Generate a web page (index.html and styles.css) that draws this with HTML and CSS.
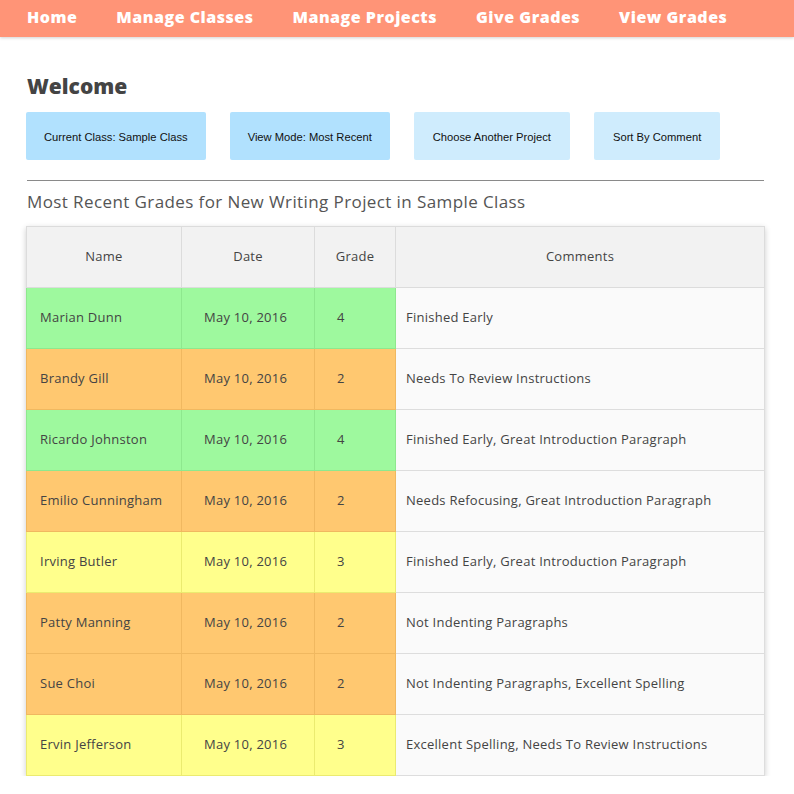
FILE: index.html
```html
<!DOCTYPE html>
<html>
<head>
<meta charset="utf-8">
<link rel="stylesheet" href="styles.css">
</head>
<body>
<nav class="nav">
  <a class="nav-link">Home</a>
  <a class="nav-link">Manage Classes</a>
  <a class="nav-link">Manage Projects</a>
  <a class="nav-link">Give Grades</a>
  <a class="nav-link">View Grades</a>
</nav>
<main class="main">
  <h1 class="welcome">Welcome</h1>
  <div class="buttons">
    <div class="btn btn-dark">Current Class: Sample Class</div>
    <div class="btn btn-dark">View Mode: Most Recent</div>
    <div class="btn btn-light">Choose Another Project</div>
    <div class="btn btn-light">Sort By Comment</div>
  </div>
  <hr class="rule">
  <h2 class="title">Most Recent Grades for New Writing Project in Sample Class</h2>
  <table class="grades">
    <colgroup>
      <col class="c-name"><col class="c-date"><col class="c-grade"><col class="c-comm">
    </colgroup>
    <thead>
      <tr><th>Name</th><th>Date</th><th>Grade</th><th>Comments</th></tr>
    </thead>
    <tbody>
      <tr class="g4"><td class="name">Marian Dunn</td><td class="date">May 10, 2016</td><td class="grade">4</td><td class="comm">Finished Early</td></tr>
      <tr class="g2"><td class="name">Brandy Gill</td><td class="date">May 10, 2016</td><td class="grade">2</td><td class="comm">Needs To Review Instructions</td></tr>
      <tr class="g4"><td class="name">Ricardo Johnston</td><td class="date">May 10, 2016</td><td class="grade">4</td><td class="comm">Finished Early, Great Introduction Paragraph</td></tr>
      <tr class="g2"><td class="name">Emilio Cunningham</td><td class="date">May 10, 2016</td><td class="grade">2</td><td class="comm">Needs Refocusing, Great Introduction Paragraph</td></tr>
      <tr class="g3"><td class="name">Irving Butler</td><td class="date">May 10, 2016</td><td class="grade">3</td><td class="comm">Finished Early, Great Introduction Paragraph</td></tr>
      <tr class="g2"><td class="name">Patty Manning</td><td class="date">May 10, 2016</td><td class="grade">2</td><td class="comm">Not Indenting Paragraphs</td></tr>
      <tr class="g2"><td class="name">Sue Choi</td><td class="date">May 10, 2016</td><td class="grade">2</td><td class="comm">Not Indenting Paragraphs, Excellent Spelling</td></tr>
      <tr class="g3"><td class="name">Ervin Jefferson</td><td class="date">May 10, 2016</td><td class="grade">3</td><td class="comm">Excellent Spelling, Needs To Review Instructions</td></tr>
    </tbody>
  </table>
</main>
</body>
</html>
```
FILE: styles.css
```css
* { box-sizing: border-box; }
html, body { margin: 0; padding: 0; background: #fff; }
body { font-family: "Open Sans", "Liberation Sans", sans-serif; color: #444; }

.nav {
  height: 37px;
  background: #ff9477;
  display: flex;
  align-items: center;
  gap: 39px;
  padding: 0 0 0 27px;
  box-shadow: 0 1px 3px rgba(0,0,0,0.18);
}
.nav-link {
  font-family: "Open Sans", "DejaVu Sans", sans-serif;
  font-weight: 800;
  font-size: 16px;
  color: #fff;
  letter-spacing: 0.5px;
  line-height: 1;
  position: relative;
  top: -2px;
}

.main { padding: 0 30px 0 26px; }

.welcome {
  font-family: "Open Sans", "DejaVu Sans", sans-serif;
  font-weight: 800;
  font-size: 21px;
  color: #444;
  margin: 36px 0 0 1px;
  line-height: 26px;
  letter-spacing: 0px;
}

.buttons {
  display: flex;
  gap: 24px;
  margin-top: 13px;
}
.btn {
  height: 48px;
  display: flex;
  align-items: center;
  padding: 1px 18px 0;
  border-radius: 2px;
  font-family: "Liberation Sans", Arial, sans-serif;
  font-size: 11.2px;
  color: #111;
}
.btn-dark { background: #b1e1fe; }
.btn-light { background: #cfecfd; padding: 1px 19px 0; }

.rule {
  margin: 20px 0 0 1px;
  border: 0;
  border-top: 1px solid #8a8a8a;
  height: 0;
}

.title {
  font-weight: 400;
  font-size: 17px;
  color: #555;
  margin: 10px 0 0 1px;
  line-height: 22px;
  letter-spacing: 0.4px;
}

.grades {
  margin-top: 13px;
  width: 738px;
  border-collapse: collapse;
  table-layout: fixed;
  font-size: 13px;
  letter-spacing: 0.25px;
  color: #444;
  box-shadow: 0 2px 6px rgba(0,0,0,0.2);
}
.c-name { width: 155px; }
.c-date { width: 133px; }
.c-grade { width: 81px; }
.c-comm { width: 369px; }

.grades th {
  height: 61px;
  background: #f2f2f2;
  border: 1px solid #dcdcdc;
  font-weight: 400;
  text-align: center;
  padding: 0 0 2px;
}
.grades td {
  height: 61px;
  padding: 0 0 2px;
  border: 1px solid #ddd;
  white-space: nowrap;
}
.grades td.name { padding-left: 13px; }
.grades td.date { padding-left: 22px; }
.grades td.grade { padding-left: 22px; }
.grades td.comm { padding-left: 10px; background: #fafafa; }

.g4 td.name, .g4 td.date, .g4 td.grade { background: #9ef99e; border-color: #8ee88e; }
.g2 td.name, .g2 td.date, .g2 td.grade { background: #ffc870; border-color: #f0b860; }
.g3 td.name, .g3 td.date, .g3 td.grade { background: #ffff8c; border-color: #ebeb70; }
```
